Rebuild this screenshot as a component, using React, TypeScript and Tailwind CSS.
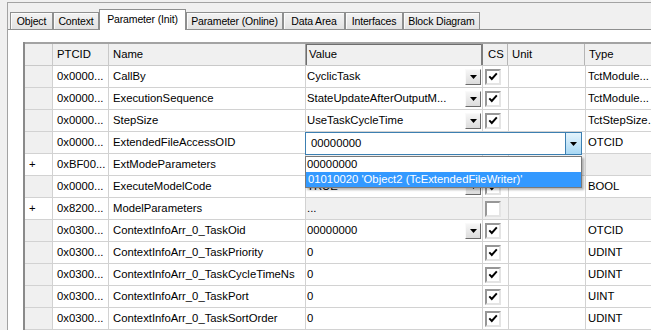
import React from "react";

type Row = {
  plus?: boolean;
  ptcid: string;
  name: string;
  value?: string;
  combo?: boolean;
  cs?: boolean;
  gray?: boolean;
  type?: string;
  editing?: boolean;
};

const ROWS: Row[] = [
  { ptcid: "0x0000...", name: "CallBy", value: "CyclicTask", combo: true, cs: true, type: "TctModule..." },
  { ptcid: "0x0000...", name: "ExecutionSequence", value: "StateUpdateAfterOutputM...", combo: true, cs: true, type: "TctModule..." },
  { ptcid: "0x0000...", name: "StepSize", value: "UseTaskCycleTime", combo: true, cs: true, type: "TctStepSize..." },
  { ptcid: "0x0000...", name: "ExtendedFileAccessOID", value: "00000000", editing: true, cs: true, type: "OTCID" },
  { plus: true, ptcid: "0xBF00...", name: "ExtModeParameters", gray: true, type: "" },
  { ptcid: "0x0000...", name: "ExecuteModelCode", value: "TRUE", combo: true, cs: true, type: "BOOL" },
  { plus: true, ptcid: "0x8200...", name: "ModelParameters", value: "...", gray: true, cs: false, type: "" },
  { ptcid: "0x0300...", name: "ContextInfoArr_0_TaskOid", value: "00000000", combo: true, cs: true, type: "OTCID" },
  { ptcid: "0x0300...", name: "ContextInfoArr_0_TaskPriority", value: "0", cs: true, type: "UDINT" },
  { ptcid: "0x0300...", name: "ContextInfoArr_0_TaskCycleTimeNs", value: "0", cs: true, type: "UDINT" },
  { ptcid: "0x0300...", name: "ContextInfoArr_0_TaskPort", value: "0", cs: true, type: "UINT" },
  { ptcid: "0x0300...", name: "ContextInfoArr_0_TaskSortOrder", value: "0", cs: true, type: "UDINT" },
];

const TABS = [
  { label: "Object", w: "w-[43px]" },
  { label: "Context", w: "w-[46px]" },
  { label: "Parameter (Init)", w: "w-[87px]", active: true },
  { label: "Parameter (Online)", w: "w-[97px]" },
  { label: "Data Area", w: "w-[62px]" },
  { label: "Interfaces", w: "w-[58px]" },
  { label: "Block Diagram", w: "w-[77px]" },
];

function Triangle() {
  return (
    <svg width="7" height="4" viewBox="0 0 7 4">
      <path d="M0 0 H7 L3.5 4 Z" fill="#000" />
    </svg>
  );
}

function DropBtn() {
  return (
    <div className="w-[16px] h-[16px] shrink-0 mr-[1px] bg-linear-to-b from-[#f6f6f6] to-[#dcdcdc] border border-t-[#fafafa] border-l-[#fafafa] border-r-[#6b6b6b] border-b-[#6b6b6b] flex items-center justify-center">
      <Triangle />
    </div>
  );
}

function Check({ on }: { on: boolean }) {
  return (
    <div className="w-[16px] h-[16px] ml-[2px] bg-white border-2 border-t-[#979797] border-l-[#979797] border-r-[#e4e4e4] border-b-[#e4e4e4] flex items-center justify-center">
      {on && (
        <svg width="10" height="9" viewBox="0 0 10 9">
          <path d="M1.3 4.3 L3.8 7 L8.8 1.3" fill="none" stroke="#000" strokeWidth="1.9" />
        </svg>
      )}
    </div>
  );
}

export default function App() {
  return (
    <div className="w-[651px] h-[330px] overflow-hidden bg-[#f0f0f0] font-['Liberation_Sans',Arial,sans-serif] text-black">
      <div className="ml-[7px] mt-[2px] h-[340px] border-l border-t border-[#a3a3a3] flex flex-col">
        {/* tab strip */}
        <div className="flex items-end h-[20px] mt-[6px] pl-[2px] text-[10.5px] tracking-[-0.15px]">
          {TABS.map((t) =>
            t.active ? (
              <div
                key={t.label}
                className={`${t.w} h-[21px] -mb-px relative z-10 bg-white border border-b-0 border-[#8e8f8f] flex items-start justify-center pt-[2px]`}
              >
                {t.label}
              </div>
            ) : (
              <div
                key={t.label}
                className={`${t.w} h-[17px] bg-linear-to-b from-[#f3f3f3] to-[#e2e2e2] border border-b-0 border-[#8e8f8f] shadow-[inset_1px_1px_0_#fbfbfb] flex items-center justify-center pt-px`}
              >
                {t.label}
              </div>
            )
          )}
        </div>

        {/* tab page */}
        <div className="flex-1 bg-white border-t border-[#8e8f8f] pl-[15px] pt-[12px]">
          <div className="w-[700px] border-l-2 border-[#8a8a8a] text-[11.3px] relative">
            {/* header */}
            <div className="flex h-[24px] bg-[#f0f0f0] border-t-2 border-b border-t-[#a3a3a3] border-b-[#c9c9c9]">
              <div className="w-[28px] shrink-0 border-r border-[#c9c9c9]" />
              <div className="w-[56px] shrink-0 border-r border-[#c9c9c9] pl-[4px] flex items-center">PTCID</div>
              <div className="w-[197px] shrink-0 border-r border-[#a0a0a0] pl-[4px] flex items-center">Name</div>
              <div className="w-[177px] shrink-0 border-r-2 border-[#7d7d7d] shadow-[inset_1px_1px_0_#6e6e6e] pl-[3px] flex items-center">Value</div>
              <div className="w-[25px] shrink-0 border-r border-[#b5b5b5] pl-[5px] flex items-center">CS</div>
              <div className="w-[77px] shrink-0 border-r border-[#b5b5b5] pl-[4px] flex items-center">Unit</div>
              <div className="w-[120px] shrink-0 pl-[4px] flex items-center">Type</div>
            </div>

            {ROWS.map((r, i) => {
              const side = r.gray ? "bg-[#f0f0f0]" : "bg-white";
              return (
                <div key={i} className="flex h-[22px] border-b border-[#d2d2d2]">
                  <div className={`w-[28px] shrink-0 border-r border-[#d2d2d2] pl-[4px] flex items-center ${r.plus ? "bg-white" : "bg-[#f0f0f0]"}`}>
                    {r.plus ? "+" : ""}
                  </div>
                  <div className="w-[56px] shrink-0 border-r border-[#d2d2d2] pl-[4px] flex items-center whitespace-nowrap overflow-hidden">
                    {r.ptcid}
                  </div>
                  <div className="w-[197px] shrink-0 border-r border-[#d2d2d2] pl-[4px] flex items-center whitespace-nowrap overflow-hidden">
                    {r.name}
                  </div>
                  <div className={`w-[177px] shrink-0 border-r border-[#d2d2d2] pl-[1px] flex items-center relative ${side}`}>
                    {r.editing ? (
                      <div className="absolute -left-px top-0 z-10 w-[277px]">
                        <div className="h-[23px] bg-white border border-[#3c7fb1] flex items-center">
                          <span className="flex-1 pl-[5px]">{r.value}</span>
                          <div className="w-[16px] h-[21px] bg-linear-to-b from-[#e5f4fc] to-[#a8d8f4] border-l border-[#3c7fb1] flex items-center justify-center">
                            <Triangle />
                          </div>
                        </div>
                        <div className="mt-px h-[32px] w-[277px] bg-white border border-[#7a7a7a] shadow-[2px_2px_2px_rgba(0,0,0,0.28)] flex flex-col">
                          <div className="h-[15px] pl-px flex items-center">00000000</div>
                          <div className="h-[15px] pl-[2px] flex items-center bg-[#3399ff] text-white">
                            01010020 'Object2 (TcExtendedFileWriter)'
                          </div>
                        </div>
                      </div>
                    ) : (
                      <>
                        <span className="flex-1 whitespace-nowrap overflow-hidden">{r.value}</span>
                        {r.combo && <DropBtn />}
                      </>
                    )}
                  </div>
                  <div className={`w-[26px] shrink-0 border-r border-[#d2d2d2] flex items-center ${side}`}>
                    {r.cs !== undefined && <Check on={r.cs} />}
                  </div>
                  <div className={`w-[77px] shrink-0 border-r border-[#d2d2d2] ${side}`} />
                  <div className={`w-[120px] shrink-0 pl-[2px] flex items-center whitespace-nowrap ${side}`}>
                    {r.type}
                  </div>
                </div>
              );
            })}
          </div>
        </div>
      </div>
    </div>
  );
}
